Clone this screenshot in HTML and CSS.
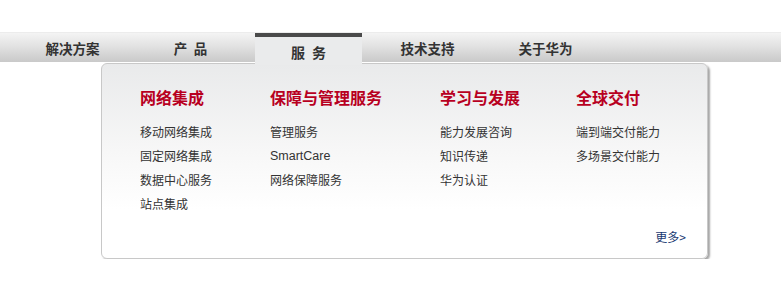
FILE: index.html
```html
<!DOCTYPE html>
<html lang="zh-CN">
<head>
<meta charset="utf-8">
<title>服务</title>
<link rel="stylesheet" href="styles.css">
</head>
<body>
<div class="page">
  <nav class="nav">
    <a class="nav-item">解决方案</a>
    <a class="nav-item">产&ensp;品</a>
    <a class="nav-item active">服&ensp;务</a>
    <a class="nav-item">技术支持</a>
    <a class="nav-item">关于华为</a>
  </nav>
  <div class="panel">
    <div class="cols">
      <div class="col c1">
        <h3>网络集成</h3>
        <ul>
          <li>移动网络集成</li>
          <li>固定网络集成</li>
          <li>数据中心服务</li>
          <li>站点集成</li>
        </ul>
      </div>
      <div class="col c2">
        <h3>保障与管理服务</h3>
        <ul>
          <li>管理服务</li>
          <li class="latin">SmartCare</li>
          <li>网络保障服务</li>
        </ul>
      </div>
      <div class="col c3">
        <h3>学习与发展</h3>
        <ul>
          <li>能力发展咨询</li>
          <li>知识传递</li>
          <li>华为认证</li>
        </ul>
      </div>
      <div class="col c4">
        <h3>全球交付</h3>
        <ul>
          <li>端到端交付能力</li>
          <li>多场景交付能力</li>
        </ul>
      </div>
    </div>
    <div class="more">更多&gt;</div>
  </div>
</div>
</body>
</html>
```
FILE: styles.css
```css
html, body {
  margin: 0;
  padding: 0;
  background: #ffffff;
}
body {
  font-family: "Noto Sans CJK SC", "Liberation Sans", sans-serif;
  color: #333;
}
.page {
  padding-top: 32px;
}
.nav {
  display: flex;
  height: 30px;
  padding-left: 19px;
  gap: 11px;
  background: linear-gradient(to bottom, #f4f4f4 0%, #e2e2e2 45%, #c9c9c9 100%);
  border-top: 1px solid #ececec;
  box-sizing: border-box;
}
.nav-item {
  width: 107px;
  display: flex;
  align-items: center;
  justify-content: center;
  font-size: 13.5px;
  font-weight: bold;
  color: #333;
  text-decoration: none;
  box-sizing: border-box;
}
.nav-item:nth-child(4) { margin-left: 1px; }
.nav-item.active {
  position: relative;
  z-index: 2;
  height: 32px;
  border-top: 4px solid #4a4a4a;
  background: #eaebec;
  padding-top: 1px;
  font-size: 14px;
}
.panel {
  margin-top: 1px;
  margin-left: 101px;
  width: 607px;
  height: 196px;
  box-sizing: border-box;
  border: 1px solid #c8c8c8;
  border-radius: 6px;
  background: linear-gradient(to bottom, #e9eaeb 0%, #f7f7f7 45%, #ffffff 75%);
  box-shadow: 2px 2px 2px rgba(0,0,0,0.35);
  position: relative;
  padding: 21px 0 0 38px;
}
.cols {
  display: flex;
}
.col h3 {
  margin: 0 0 11px 0;
  font-size: 16px;
  font-weight: bold;
  color: #b8001f;
  line-height: 24px;
}
.col ul {
  list-style: none;
  margin: 0;
  padding: 0;
}
.col li {
  font-size: 12px;
  line-height: 24px;
  color: #333;
}
.col li.latin {
  font-family: "Liberation Sans", sans-serif;
  font-size: 12.5px;
}
.c1 { width: 130px; }
.c2 { width: 170px; }
.c3 { width: 136px; }
.c4 { width: 120px; }
.more {
  position: absolute;
  right: 21px;
  bottom: 13px;
  font-size: 12px;
  color: #1b3a72;
  line-height: 16px;
}
```
